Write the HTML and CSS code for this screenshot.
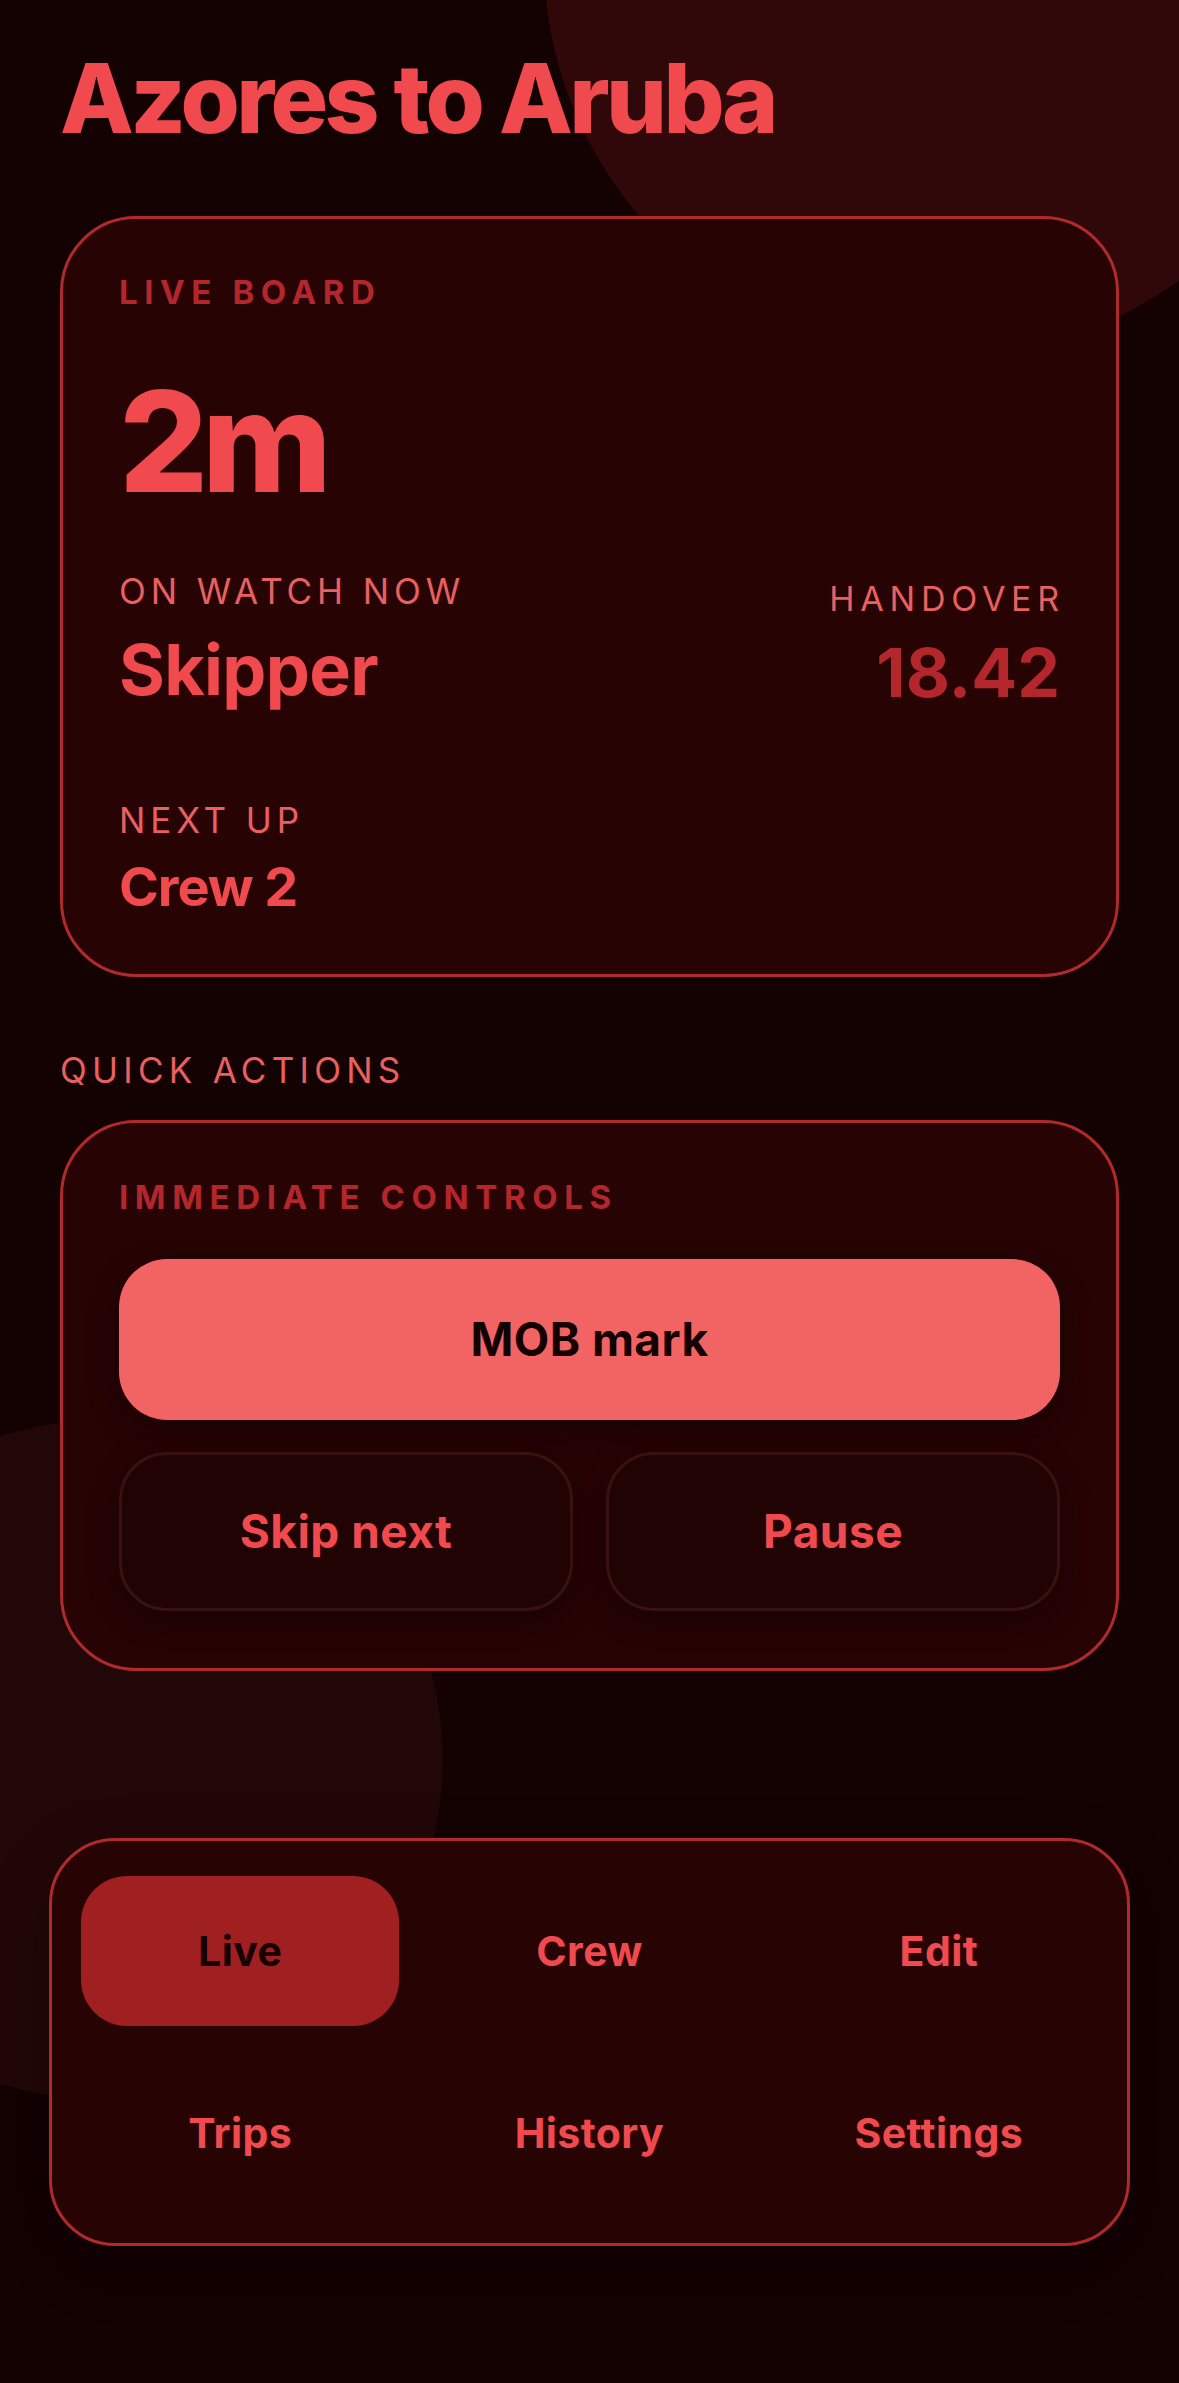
FILE: index.html
```html
<!DOCTYPE html>
<html lang="en">
<head>
<meta charset="utf-8">
<title>Azores to Aruba</title>
<link rel="stylesheet" href="styles.css">
</head>
<body>
<main class="page">
  <h1 class="title">Azores to Aruba</h1>

  <section class="card board">
    <div class="eyebrow">LIVE BOARD</div>
    <div class="big">2m</div>
    <div class="watch-row">
      <div class="col">
        <div class="label">ON WATCH NOW</div>
        <div class="name">Skipper</div>
      </div>
      <div class="col right">
        <div class="label small">HANDOVER</div>
        <div class="time">18.42</div>
      </div>
    </div>
    <div class="next">
      <div class="label">NEXT UP</div>
      <div class="next-name">Crew 2</div>
    </div>
  </section>

  <div class="section-label">QUICK ACTIONS</div>

  <section class="card actions">
    <div class="eyebrow">IMMEDIATE CONTROLS</div>
    <button class="btn primary">MOB mark</button>
    <div class="btn-row">
      <button class="btn secondary">Skip next</button>
      <button class="btn secondary">Pause</button>
    </div>
  </section>

  <nav class="tabbar">
    <div class="tab active">Live</div>
    <div class="tab">Crew</div>
    <div class="tab">Edit</div>
    <div class="tab">Trips</div>
    <div class="tab">History</div>
    <div class="tab">Settings</div>
  </nav>
</main>
</body>
</html>
```

FILE: styles.css
```css
* { box-sizing: border-box; }

html, body {
  margin: 0;
  padding: 0;
}

body {
  min-height: 2383px;
  font-family: Inter, "Noto Sans", "Liberation Sans", sans-serif;
  color: #f04a4e;
  background:
    radial-gradient(circle at 944px -44px, #300809 0, #300809 400px, rgba(48,8,9,0) 401px),
    radial-gradient(circle at 103px 1760px, #220708 0, #220708 339px, rgba(34,7,8,0) 340px),
    #140102;
  background-repeat: no-repeat;
}

.page {
  padding: 41px 60px 0;
  display: flex;
  flex-direction: column;
}

.title {
  margin: 0;
  font-size: 96px;
  line-height: 1.2;
  font-weight: 800;
  letter-spacing: -0.037em;
  color: #f04a4e;
}

.card {
  background: #270304;
  border: 3px solid #b02a2b;
  border-radius: 76px;
}

.board {
  margin-top: 60px;
  padding: 54px 56px 54px;
  display: flex;
  flex-direction: column;
}

.eyebrow {
  font-size: 33px;
  line-height: 1.2;
  font-weight: 700;
  letter-spacing: 0.2em;
  color: #b3262b;
}

.big {
  margin-top: 58px;
  font-size: 140px;
  line-height: 1;
  font-weight: 800;
  letter-spacing: -0.045em;
  color: #f04a4e;
}

.watch-row {
  margin-top: 59px;
  display: flex;
  justify-content: space-between;
  align-items: flex-start;
}

.col {
  display: flex;
  flex-direction: column;
}

.col.right {
  align-items: flex-end;
  padding-top: 9px;
}

.label {
  font-size: 35px;
  line-height: 1.2;
  font-weight: 400;
  letter-spacing: 0.14em;
  color: #e8605f;
}

.label.small {
  font-size: 34px;
  letter-spacing: 0.17em;
  margin-right: -5px;
}

.name {
  margin-top: 16px;
  font-size: 70px;
  line-height: 1.2;
  font-weight: 700;
  letter-spacing: -0.01em;
}

.time {
  margin-top: 12px;
  font-size: 68px;
  line-height: 1.2;
  font-weight: 700;
  letter-spacing: 0;
  color: #b3262b;
}

.next {
  margin-top: 86px;
  display: flex;
  flex-direction: column;
}

.next-name {
  margin-top: 14px;
  font-size: 54px;
  line-height: 1.2;
  font-weight: 700;
  letter-spacing: -0.02em;
}

.section-label {
  margin-top: 72px;
  font-size: 35px;
  line-height: 1.2;
  font-weight: 400;
  letter-spacing: 0.15em;
  color: #e8605f;
}

.actions {
  margin-top: 29px;
  padding: 55px 56px 57px;
  display: flex;
  flex-direction: column;
}

.btn {
  font-family: inherit;
  font-size: 46px;
  font-weight: 700;
  letter-spacing: 0.01em;
  border-radius: 48px;
  cursor: pointer;
  box-shadow: 0 10px 30px rgba(0, 0, 0, 0.35);
}

.btn.primary {
  margin-top: 41px;
  height: 161px;
  background: #f26464;
  color: #140000;
  border: none;
}

.btn-row {
  margin-top: 32px;
  display: grid;
  grid-template-columns: 1fr 1fr;
  gap: 33px;
}

.btn.secondary {
  height: 159px;
  background: #220304;
  border: 3px solid #3a1111;
  color: #f04a4e;
}

.tabbar {
  margin: 167px -11px 0;
  background: #270304;
  border: 3px solid #b02a2b;
  border-radius: 66px;
  padding: 35px 29px 35px;
  display: grid;
  grid-template-columns: repeat(3, 1fr);
  column-gap: 31px;
  row-gap: 32px;
  box-shadow: 0 20px 60px rgba(0, 0, 0, 0.3);
}

.tab {
  height: 150px;
  display: flex;
  align-items: center;
  justify-content: center;
  font-size: 41px;
  font-weight: 700;
  letter-spacing: 0.01em;
  color: #f04a4e;
  border-radius: 46px;
}

.tab.active {
  background: #a02021;
  color: #160000;
}
```
